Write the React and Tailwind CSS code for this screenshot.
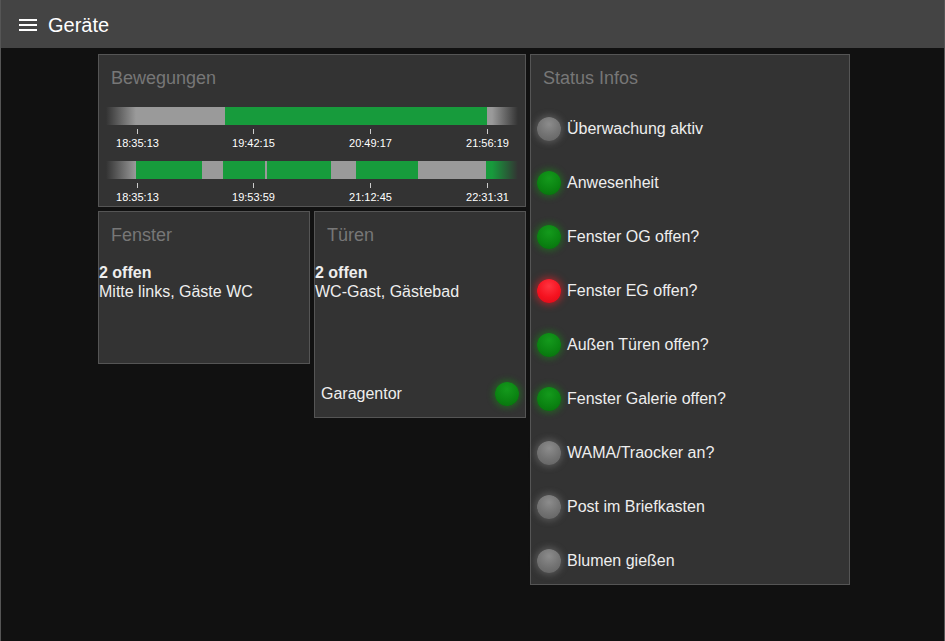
import React from 'react';

const FONT = { fontFamily: '"Liberation Sans", Arial, sans-serif' };

const GREEN = '#179b3c';
const GRAY = '#9a9a9a';

// motion timelines: segments in px along a 412px wide bar
const TIMELINES = [
  {
    segments: [
      { w: 119, c: GRAY },
      { w: 262, c: GREEN },
      { w: 31, c: GRAY },
    ],
    labels: ['18:35:13', '19:42:15', '20:49:17', '21:56:19'],
  },
  {
    segments: [
      { w: 30, c: GRAY },
      { w: 66, c: GREEN },
      { w: 21, c: GRAY },
      { w: 42, c: GREEN },
      { w: 2, c: GRAY },
      { w: 64, c: GREEN },
      { w: 25, c: GRAY },
      { w: 62, c: GREEN },
      { w: 68, c: GRAY },
      { w: 32, c: GREEN },
    ],
    labels: ['18:35:13', '19:53:59', '21:12:45', '22:31:31'],
  },
];

const TICKS = [31, 147, 264, 381];

const STATUS = [
  { label: 'Überwachung aktiv', state: 'off' },
  { label: 'Anwesenheit', state: 'ok' },
  { label: 'Fenster OG offen?', state: 'ok' },
  { label: 'Fenster EG offen?', state: 'alarm' },
  { label: 'Außen Türen offen?', state: 'ok' },
  { label: 'Fenster Galerie offen?', state: 'ok' },
  { label: 'WAMA/Traocker an?', state: 'off' },
  { label: 'Post im Briefkasten', state: 'off' },
  { label: 'Blumen gießen', state: 'off' },
];

const LED_CLASSES = {
  off: 'bg-[radial-gradient(circle_at_50%_30%,#8c8c8c,#727272_55%,#606060)] shadow-[0_0_6px_2px_rgba(150,150,150,0.35)]',
  ok: 'bg-[radial-gradient(circle_at_50%_30%,#149a1c,#0b8412_55%,#076d0c)] shadow-[0_0_6px_2px_rgba(20,150,20,0.45)]',
  alarm: 'bg-[radial-gradient(circle_at_50%_30%,#ff3440,#f5121f_55%,#d80b18)] shadow-[0_0_7px_2px_rgba(255,30,40,0.5)]',
};

const Led = ({ state }) => (
  <div className={`w-[24px] h-[24px] rounded-full shrink-0 ${LED_CLASSES[state]}`}></div>
);

const PanelTitle = ({ children }) => (
  <h2 className="pt-[11px] px-[12px] text-[18px] leading-[24px] text-[#777]">{children}</h2>
);

const Timeline = ({ segments, labels }) => (
  <div>
    <div className="relative h-[18px] flex">
      {segments.map((s, i) => (
        <div key={i} className="h-full" style={{ width: s.w, backgroundColor: s.c }}></div>
      ))}
      {/* faded ends */}
      <div className="absolute left-0 top-0 h-full w-[30px] bg-gradient-to-r from-[#333] to-transparent"></div>
      <div className="absolute right-0 top-0 h-full w-[26px] bg-gradient-to-l from-[#333] to-transparent"></div>
    </div>
    <div className="relative h-[36px]">
      {TICKS.map((x, i) => (
        <React.Fragment key={i}>
          <div className="absolute top-[4px] w-px h-[5px] bg-[#ccc]" style={{ left: x }}></div>
          <div className="absolute top-[12px] w-[60px] -ml-[30px] text-center text-[11px] leading-[13px] text-white" style={{ left: x + 0.5 }}>
            {labels[i]}
          </div>
        </React.Fragment>
      ))}
    </div>
  </div>
);

export default function App() {
  return (
    <div className="h-[641px] bg-[#111] border-x border-[#555] text-white overflow-hidden" style={FONT}>
      {/* top bar */}
      <header className="h-[48px] bg-[#444] flex items-center pl-[15px] pt-[2px]">
        <svg width="24" height="24" viewBox="0 0 24 24" fill="#fff">
          <path d="M3 18h18v-2H3v2zm0-5h18v-2H3v2zm0-7v2h18V6H3z" />
        </svg>
        <span className="ml-[8px] text-[20px] leading-none">Geräte</span>
      </header>

      <div className="pt-[6px] pl-[97px] flex gap-[4px] items-start">
        <div className="w-[428px] flex flex-col gap-[4px]">
          {/* Bewegungen */}
          <section className="h-[153px] bg-[#333] border border-[#555]">
            <PanelTitle>Bewegungen</PanelTitle>
            <div className="mt-[17px] px-[7px]">
              {TIMELINES.map((t, i) => (
                <Timeline key={i} {...t} />
              ))}
            </div>
          </section>

          <div className="flex gap-[4px] items-start">
            {/* Fenster */}
            <section className="w-[212px] h-[153px] bg-[#333] border border-[#555]">
              <PanelTitle>Fenster</PanelTitle>
              <div className="mt-[16px] text-[16px] leading-[19px] text-[#eee]">
                <div className="font-bold">2 offen</div>
                <div>Mitte links, Gäste WC</div>
              </div>
            </section>

            {/* Türen */}
            <section className="w-[212px] h-[207px] bg-[#333] border border-[#555] flex flex-col">
              <PanelTitle>Türen</PanelTitle>
              <div className="mt-[16px] text-[16px] leading-[19px] text-[#eee]">
                <div className="font-bold">2 offen</div>
                <div>WC-Gast, Gästebad</div>
              </div>
              <div className="mt-auto mb-[11px] px-[6px] flex items-center justify-between">
                <span className="text-[16px] text-[#eee]">Garagentor</span>
                <Led state="ok" />
              </div>
            </section>
          </div>
        </div>

        {/* Status Infos */}
        <section className="w-[320px] h-[531px] bg-[#333] border border-[#555]">
          <PanelTitle>Status Infos</PanelTitle>
          <ul className="mt-[12px] pl-[6px]">
            {STATUS.map((s) => (
              <li key={s.label} className="h-[54px] flex items-center gap-[6px]">
                <Led state={s.state} />
                <span className="text-[16px] text-[#eee]">{s.label}</span>
              </li>
            ))}
          </ul>
        </section>
      </div>
    </div>
  );
}
